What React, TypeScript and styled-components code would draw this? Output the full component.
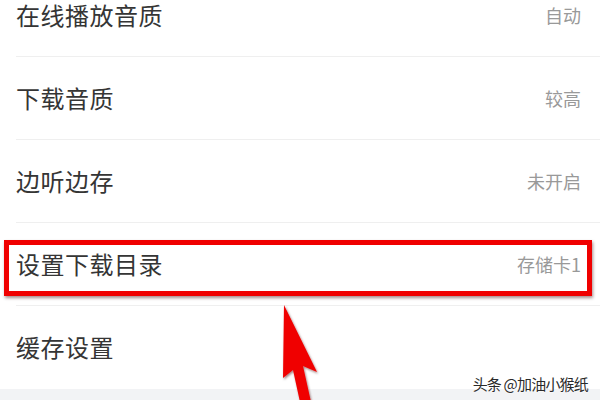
import React from "react";
import styled, { createGlobalStyle } from "styled-components";

const Global = createGlobalStyle`
  html, body { margin: 0; padding: 0; background: #ffffff; }
  body { width: 600px; height: 400px; overflow: hidden; }
  #root { width: 600px; height: 400px; }
`;

const Screen = styled.div`
  position: relative;
  width: 600px;
  height: 400px;
  overflow: hidden;
  background: #ffffff;
  display: flex;
  flex-direction: column;
  font-family: "Noto Sans CJK SC", "Noto Sans", sans-serif;
`;

const List = styled.div`
  display: flex;
  flex-direction: column;
  margin-top: -26px;
`;

const Row = styled.div<{ $last?: boolean }>`
  height: 82px;
  display: flex;
  align-items: center;
  justify-content: space-between;
  padding: 0 19px 0 16px;
  position: relative;
  margin-bottom: 1px;
  &::before {
    content: "";
    position: absolute;
    left: 16px;
    right: 0;
    bottom: -1px;
    height: 1px;
    background: ${(p) => (p.$last ? "transparent" : "#efefef")};
  }
`;

const Label = styled.span`
  font-size: 24px;
  color: #353535;
  letter-spacing: 0.5px;
  line-height: 1;
`;

const Value = styled.span`
  font-size: 18px;
  color: #999999;
  line-height: 1;
`;

const Footer = styled.div`
  flex: 1;
  background: #f2f3f5;
`;

const Highlight = styled.div`
  position: absolute;
  left: 4px;
  top: 240px;
  width: 588px;
  height: 56px;
  box-sizing: border-box;
  border: 5px solid #f00000;
  box-shadow: 1px 2px 3px rgba(60, 0, 0, 0.45);
  pointer-events: none;
`;

const Arrow = styled.svg`
  position: absolute;
  left: 0;
  top: 0;
  width: 600px;
  height: 400px;
  pointer-events: none;
`;

const Watermark = styled.div`
  position: absolute;
  right: 12px;
  bottom: 9px;
  font-size: 15px;
  color: #2a2a2a;
  line-height: 1;
  text-shadow: 0 0 2px #ffffff, 0 0 2px #ffffff;
  letter-spacing: -0.8px;
`;

const items = [
  { label: "在线播放音质", value: "自动" },
  { label: "下载音质", value: "较高" },
  { label: "边听边存", value: "未开启" },
  { label: "设置下载目录", value: "存储卡1" },
  { label: "缓存设置", value: "" },
];

export default function App() {
  return (
    <>
      <Global />
      <Screen>
        <List>
          {items.map((it, i) => (
            <Row key={it.label} $last={i === items.length - 1}>
              <Label>{it.label}</Label>
              <Value>{it.value}</Value>
            </Row>
          ))}
        </List>
        <Footer />
        <Highlight />
        <Arrow viewBox="0 0 600 400">
          <defs>
            <filter id="sh" x="-20%" y="-20%" width="140%" height="140%">
              <feDropShadow dx="1" dy="1.5" stdDeviation="1.2" floodColor="#400000" floodOpacity="0.5" />
            </filter>
          </defs>
          <polygon
            points="284,305 317,372 303,366 311,402 300,402 293,370 283,378"
            fill="#f00000"
            filter="url(#sh)"
          />
        </Arrow>
        <Watermark>头条 @加油小猴纸</Watermark>
      </Screen>
    </>
  );
}
